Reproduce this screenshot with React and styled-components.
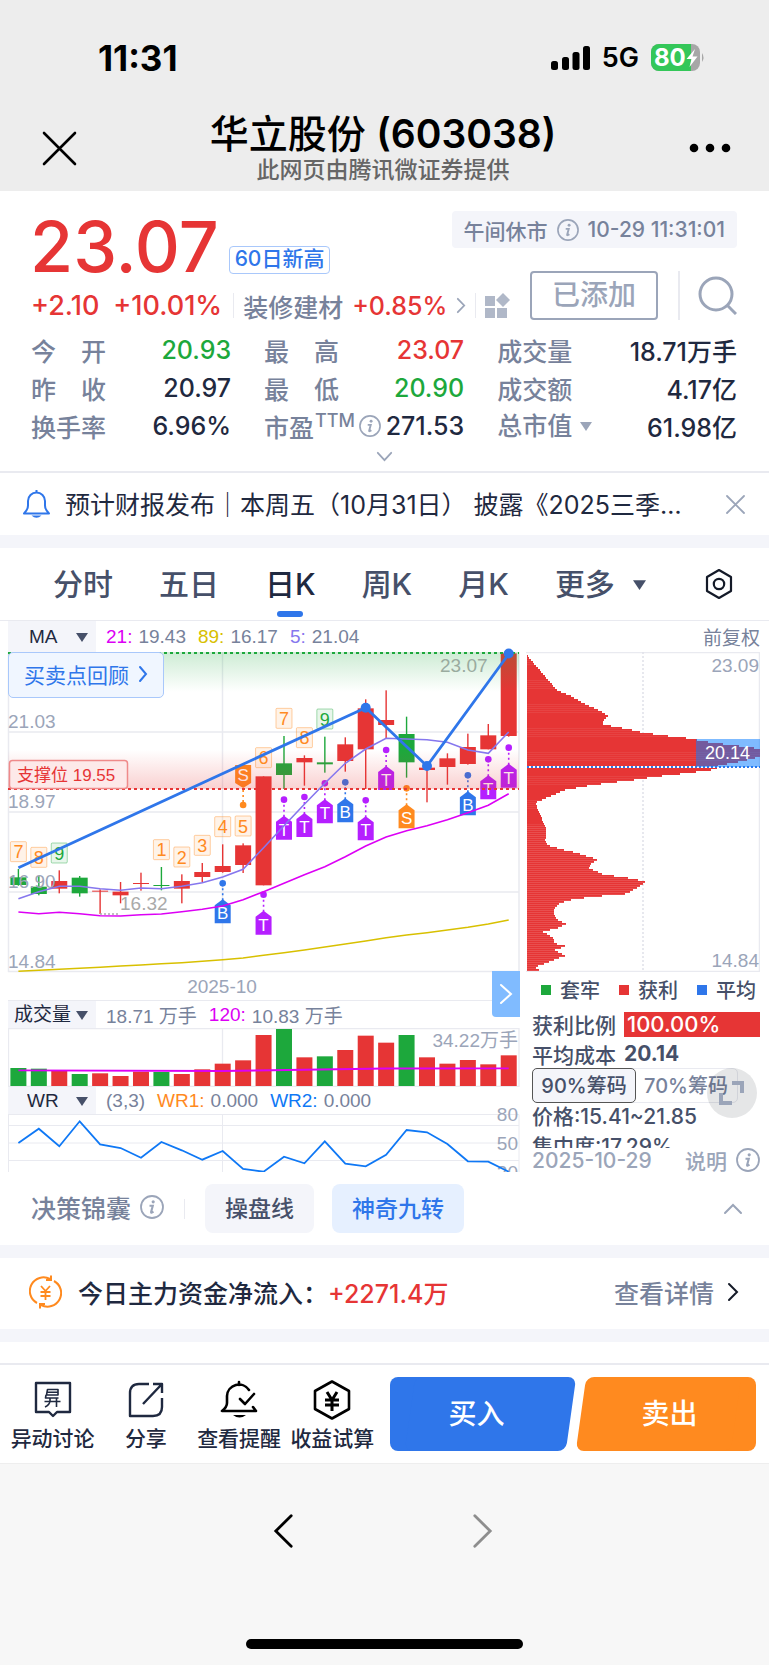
import React from "react";
import styled, { createGlobalStyle } from "styled-components";

const c = {
  red: "#e63535", green: "#1da83c", blue: "#2f76ea", orange: "#ff8a1f",
  ink: "#1f2940", slate: "#465069", muted: "#77829b", pale: "#9ba5b9",
  line: "#e9eaf0", band: "#f4f5fa", purple: "#b51fff", magenta: "#dc00f5",
  yellow: "#d8c000", ma5: "#8677ee",
};
const arial = '"Liberation Sans", "Noto Sans CJK SC", sans-serif';

const Global = createGlobalStyle`
  * { box-sizing: border-box; }
  body { margin: 0; background: #fff; color: ${c.ink};
    font-family: Inter, "Noto Sans CJK SC", sans-serif; font-weight: 500; }
  button, select { font: inherit; color: inherit; border: 0; background: none; padding: 0; margin: 0; }
  a { color: inherit; text-decoration: none; }
  svg { display: block; flex: none; }
  h1, p, dl, dd, dt { margin: 0; }
`;

/* ---------- phone header ---------- */
const Header = styled.header`background: #ededed; color: #000; height: 191px;`;
const StatusBar = styled.div`
  display: flex; align-items: center; justify-content: space-between;
  padding: 41px 64px 0 98px; height: 74px; gap: 12px;
`;
const Clock = styled.span`font-size: 35px; font-weight: 700;`;
const StatusIcons = styled.div`display: flex; align-items: center; gap: 12px; font-size: 27px; font-weight: 600;`;
const TitleBar = styled.div`
  display: flex; align-items: center; justify-content: space-between;
  padding: 36px 38px 0 42px;
`;
const Titles = styled.div`text-align: center;`;
const Title = styled.h1`font-size: 39px; line-height: 48px; font-weight: 500; white-space: nowrap;`;
const Code = styled.span`font-weight: 600;`;
const Subtitle = styled.p`font-size: 23px; line-height: 24px; color: #666; font-weight: 500;`;
const IconButton = styled.button`display: flex; align-items: center; justify-content: center;`;
const BarButton = styled(IconButton)`margin-top: 4px;`;

/* ---------- quote ---------- */
const Quote = styled.section`
  padding: 20px 32px 0; height: 282px; border-bottom: 2px solid ${c.line};
`;
const QuoteRow = styled.div`
  display: flex; justify-content: space-between; align-items: ${(p) => p.$align};
  height: ${(p) => p.$h}px;
`;
const PriceLine = styled.div`display: flex; align-items: flex-end; gap: 10px; height: 63px;`;
const Price = styled.strong`font-size: 70px; line-height: 55px; font-weight: 500; color: ${c.red}; margin-left: -2px;`;
const Tag = styled.span`
  height: 28px; line-height: 24px; padding: 0 5px; font-size: 21px; color: ${c.blue};
  border: 1px solid #a9c8fb; border-radius: 4px; white-space: nowrap;
`;
const ChangeLine = styled.div`
  display: flex; align-items: center; gap: 9px; height: 29px; margin-left: -1px;
  font-size: 25px; white-space: nowrap;
`;
const Change = styled.span`font-size: 27px; color: ${c.red}; margin-right: ${(p) => (p.$gap ? 5 : 2)}px;`;
const Num = styled.span`color: ${(p) => c[p.$tone] || c.ink};`;
const Muted = styled.span`color: ${c.muted};`;
const Rule = styled.i`width: ${(p) => p.$w || 1}px; height: ${(p) => p.$h}px; margin: 0 ${(p) => p.$m || 0}px; background: ${c.line}; flex: none;`;
const Pill = styled.div`
  display: flex; align-items: center; gap: 9px; height: 37px; padding: 0 12px;
  background: ${c.band}; border-radius: 4px; font-size: 21px; color: ${c.muted}; white-space: nowrap;
`;
const Actions = styled.div`display: flex; align-items: center; gap: 18px;`;
const AddButton = styled.button`
  width: 128px; height: 49px; border: 2px solid ${c.pale}; border-radius: 4px; padding-bottom: 5px;
  font-size: 28px; color: ${c.pale}; margin-right: 2px;
`;
const Stats = styled.dl`
  display: grid; grid-template-columns: 5fr 5fr 6fr; column-gap: 34px; margin-top: 11px;
`;
const Stat = styled.div`
  display: flex; align-items: center; justify-content: space-between; height: 38px;
  font-size: 25px; white-space: nowrap;
`;
const StatName = styled.dt`
  display: flex; align-items: center; gap: ${(p) => (p.$wide ? 25 : 4)}px; margin-left: -1px; color: ${c.muted}; flex: none;
`;
const Sup = styled.sup`font-size: 18px; line-height: 26px; align-self: flex-start; margin-left: -3px;`;
const Expand = styled.button`display: flex; width: 100%; height: 22px; align-items: center; justify-content: center;`;
const PlainSelect = styled.select`appearance: none; cursor: pointer; outline: none;`;
const SelectBox = styled.label`display: flex; align-items: center; gap: ${(p) => p.$gap || 6}px;`;

/* ---------- notice and tabs ---------- */
const Notice = styled.section`
  display: flex; align-items: center; gap: 15px; height: 62px; padding: 0 23px;
  font-size: 25px; font-weight: 400;
`;
const NoticeText = styled.a`
  flex: 1; min-width: 0; margin-right: 14px; padding-bottom: 3px;
  white-space: nowrap; overflow: hidden; text-overflow: ellipsis;
`;
const Band = styled.div`height: 13px; background: ${c.band};`;
const Tabs = styled.nav`
  display: flex; align-items: stretch; gap: 46px; height: 73px; padding: 0 35px 0 53px;
  font-size: 30px; color: ${c.slate}; border-bottom: 1px solid ${c.line};
`;
const Tab = styled.button`
  position: relative; white-space: nowrap; padding-bottom: 4px;
  color: ${(p) => (p.$on ? c.ink : c.slate)};
  &::after { content: ""; display: ${(p) => (p.$on ? "block" : "none")}; position: absolute;
    left: calc(50% - 13px); bottom: 3px; width: 26px; height: 6px; border-radius: 3px; background: ${c.blue}; }
`;
const TabEnd = styled.button`margin-left: auto;`;

/* ---------- charts ---------- */
const Indicator = styled.div`
  display: flex; align-items: center; height: ${(p) => p.$h || 27}px; gap: 8px;
  font: 400 19px ${arial}; color: ${c.muted}; white-space: nowrap;
`;
const IndicatorRow = styled(Indicator)`padding: 0 9px 0 8px;`;
const Pick = styled.label`
  display: flex; align-items: center; justify-content: space-between; align-self: stretch;
  width: 88px; padding: 0 8px 0 ${(p) => p.$pad}px; margin-right: 2px;
  background: ${c.band}; color: ${c.ink};
`;
const Hue = styled.span`color: ${(p) => p.$c}; margin-right: -2px; margin-left: ${(p) => (p.$first ? 0 : 4)}px;`;
const Grow = styled.span`margin-left: auto;`;
const ChartArea = styled.section`display: flex; gap: 6px; padding: 0 9px 0 8px;`;
const ChartCol = styled.div`flex: 512 1 0; min-width: 0; position: relative;`;
const ChipCol = styled.div`flex: 234 1 0; min-width: 0; position: relative; display: flex; flex-direction: column;`;
const Plot = styled.svg`width: 100%; height: auto; font-family: ${arial}; font-weight: 400;`;
const WrPlot = styled(Plot)`margin-top: -10px; position: relative;`;
const MainWrap = styled.div`position: relative; border-bottom: 1px solid ${c.line};`;
const Review = styled.button`
  position: absolute; left: 0; top: 0; display: flex; align-items: center; justify-content: center; gap: 9px;
  width: 156px; height: 46px; padding-bottom: 2px; font-size: 21px; font-weight: 400; color: ${c.blue};
  background: #f0f6ff; border: 1px solid #a9c8fb; border-radius: 5px;
`;
const Pager = styled.button`
  position: absolute; right: 0; bottom: -17px; width: 28px; height: 46px; z-index: 1;
  display: flex; align-items: center; justify-content: center;
  background: #80bbff; border-radius: 0 0 0 4px;
`;
const Legend = styled.div`
  display: flex; justify-content: space-between; align-items: center; height: 37px; padding: 0 4px 2px 15px;
  font-size: 20px; color: ${c.slate};
`;
const LegendItem = styled.span`
  display: flex; align-items: center; gap: 9px;
  &::before { content: ""; width: 10px; height: 10px; background: ${(p) => p.$c}; }
`;
const ChipInfo = styled.div`
  flex: 1 1 0; min-height: 0; overflow: hidden; padding-left: 6px;
  font-size: 21px; color: ${c.slate}; white-space: nowrap;
`;
const InfoLine = styled.div`display: flex; align-items: center; gap: 8px; height: ${(p) => p.$h}px;`;
const Ratio = styled.span`
  flex: 1; background: ${c.red}; color: #fff; height: 25px; line-height: 25px; padding-left: 3px; font-size: 22px;
`;
const Bold = styled.b`font-weight: 700;`;
const ChipTabs = styled.div`
  display: flex; width: 206px; height: 35px; border: 1px solid ${c.line}; border-radius: 5px; font-size: 20px;
`;
const ChipTab = styled.button`
  flex: 1; margin: -1px; border-radius: 5px; padding-bottom: 2px;
  border: 1px solid ${(p) => (p.$on ? "#555" : "transparent")};
  background: ${(p) => (p.$on ? c.band : "none")}; color: ${(p) => (p.$on ? c.slate : c.muted)};
`;
const ChipFoot = styled.div`
  display: flex; align-items: center; justify-content: space-between; height: 24px; padding-left: 6px;
  font-size: 21px; color: ${c.pale}; white-space: nowrap;
`;
const Help = styled.a`display: flex; align-items: center; gap: 9px;`;
const Fullscreen = styled.button`
  position: absolute; right: 3px; bottom: 54px; width: 50px; height: 50px; border-radius: 50%;
  background: rgba(20, 24, 40, 0.11); display: flex; align-items: center; justify-content: center;
`;

/* ---------- strategy, funds, bottom bar ---------- */
const Strategy = styled.section`
  display: flex; align-items: center; gap: 18px; height: 73px; padding: 0 26px 0 31px; font-size: 25px;
`;
const Named = styled.span`display: flex; align-items: center; gap: 9px; padding-bottom: 4px; color: ${c.muted};`;
const Chip = styled.button`
  height: 49px; padding: 0 20px 4px; border-radius: 8px; font-size: 23px; white-space: nowrap;
  background: ${(p) => (p.$on ? "#e6f0ff" : c.band)}; color: ${(p) => (p.$on ? c.blue : c.slate)};
`;
const Funds = styled.section`
  display: flex; align-items: center; height: 71px; padding: 0 30px 4px 29px; font-size: 25px; white-space: nowrap;
`;
const FundText = styled.span`margin-left: 16px;`;
const FundLink = styled.a`display: flex; align-items: center; gap: 13px; margin-left: auto; color: ${c.muted};`;
const NextCard = styled.div`height: 21px;`;
const BottomBar = styled.footer`
  display: flex; align-items: center; height: 101px; padding: 0 13px 0 6px;
  border-top: 2px solid ${c.line}; border-bottom: 1px solid #eee;
`;
const Tools = styled.div`display: flex; flex: 373 1 0; padding-top: 6px;`;
const Tool = styled.button`
  flex: 1 1 0; min-width: 0; display: flex; flex-direction: column; align-items: center; gap: 3px;
  font-size: 21px; line-height: 32px; white-space: nowrap;
`;
const Trade = styled.div`display: flex; flex: 366 1 0; margin-left: 11px;`;
const TradeButton = styled.button`
  position: relative; z-index: 0; flex: 1; height: 74px; color: #fff; font-size: 28px;
  padding: 0 ${(p) => (p.$sell ? "0 5px 6px" : "14px 5px 0")};
  &::before, &::after { content: ""; position: absolute; z-index: -1; top: 0; bottom: 0;
    border-radius: 8px; background: ${(p) => (p.$sell ? c.orange : c.blue)}; }
  &::before { left: ${(p) => (p.$sell ? "30px" : "0")}; right: ${(p) => (p.$sell ? "0" : "30px")}; }
  &::after { left: ${(p) => (p.$sell ? "4px" : "20px")}; right: ${(p) => (p.$sell ? "20px" : "6px")}; transform: skewX(-8deg); }
`;
const Browser = styled.nav`
  display: flex; flex-direction: column; align-items: center; justify-content: space-between;
  height: 201px; padding: 49px 0 16px; background: #f7f7f7;
`;
const History = styled.div`display: flex; justify-content: center; gap: 178px; padding-right: 4px;`;
const HomeBar = styled.span`width: 36%; height: 10px; border-radius: 5px; background: #000;`;

/* ---------- small drawings ---------- */
const Info = ({ size = 24 }) => (
  <svg width={size} height={size} viewBox="0 0 24 24">
    <circle cx="12" cy="12" r="11" fill="none" stroke={c.pale} strokeWidth="1.8" />
    <circle cx="13.2" cy="6.8" r="1.6" fill={c.pale} />
    <path d="M9.500 10.800h3.300l-1.700 6.200q-.2 1.400 2.400-.3" fill="none" stroke={c.pale} strokeWidth="2.100" />
  </svg>
);
const Caret = ({ color = c.slate, size = 12 }) => (
  <svg width={size} height={size} viewBox="0 0 12 12"><path d="M0 2h12L6 11z" fill={color} /></svg>
);
const Chevron = ({ w, h, color, sw = 2, dir = "right" }) => {
  const d = { right: `M${sw} ${sw}L${w - sw} ${h / 2}L${sw} ${h - sw}`, left: `M${w - sw} ${sw}L${sw} ${h / 2}L${w - sw} ${h - sw}`,
    down: `M${sw} ${sw}L${w / 2} ${h - sw}L${w - sw} ${sw}`, up: `M${sw} ${h - sw}L${w / 2} ${sw}L${w - sw} ${h - sw}` }[dir];
  return <svg width={w} height={h}><path d={d} fill="none" stroke={color} strokeWidth={sw} strokeLinecap="round" /></svg>;
};
const Cross = ({ size, color, sw }) => (
  <svg width={size} height={size}><path d={`M2 2L${size - 2} ${size - 2}M${size - 2} 2L2 ${size - 2}`} stroke={color} strokeWidth={sw} strokeLinecap="round" /></svg>
);

/* ---------- chart data, in plot units ---------- */
const xAt = (i) => 10.4 + 20.43 * i;
const yMain = (v) => v / 3 - 32;
const candles = [
  ["g", 772, 795, 747, 797], ["g", 800, 822, 768, 826], ["r", 783, 806, 751, 820], ["g", 773, 820, 768, 830],
  ["r", 812, 815, 808, 882], ["r", 815, 826, 786, 850], ["r", 789, 792, 758, 812], ["g", 795, 798, 741, 811],
  ["r", 783, 806, 763, 850], ["r", 756, 771, 729, 787], ["r", 738, 756, 673, 758], ["r", 676, 735, 670, 759],
  ["r", 469, 796, 469, 796], ["g", 430, 465, 348, 507], ["r", 414, 427, 406, 497], ["g", 427, 433, 350, 458],
  ["r", 373, 423, 352, 455], ["r", 265, 388, 238, 507], ["r", 300, 315, 211, 355], ["g", 342, 427, 290, 473],
  ["r", 443, 450, 430, 547], ["r", 415, 441, 400, 494], ["r", 381, 432, 341, 434], ["r", 346, 388, 312, 388],
  ["r", 100, 348, 100, 350],
];
const ma5 = [836, 815, 799, 799, 806, 811, 804, 806, 799, 788, 771, 748, 683, 617, 553, 490, 430, 387, 355, 357, 359, 367, 390, 400, 336];
const ma21 = [876, 881, 877, 881, 887, 888, 884, 882, 875, 868, 858, 839, 815, 790, 764, 740, 710, 678, 651, 632, 617, 599, 578, 556, 521];
const ma89 = [1054, 1051, 1048, 1045, 1042, 1038, 1035, 1031, 1028, 1024, 1019, 1014, 1006, 998, 990, 981, 972, 963, 953, 945, 938, 930, 922, 912, 900];
const nine = [[0, 7, 695], [1, 8, 712], [2, 9, 699], [7, 1, 689], [8, 2, 711], [9, 3, 676], [10, 4, 620], [11, 5, 618], [12, 6, 413], [13, 7, 295], [14, 8, 353], [15, 9, 297]];
const marks = [["B", 10, 790], ["T", 12, 824], ["T", 13, 539], ["T", 14, 531], ["T", 15, 490], ["B", 16, 487], ["T", 17, 541], ["T", 18, 390], ["S", 19, 505], ["B", 22, 466], ["T", 23, 418], ["T", 24, 383]];
const markColor = { B: c.blue, T: c.purple, S: c.orange };
const volumes = [264, 266, 272, 282, 280, 288, 275, 276, 282, 268, 251, 241, 165, 147, 232, 229, 210, 167, 188, 165, 232, 251, 240, 253, 226];
const wr = [489, 446, 499, 424, 493, 504, 533, 486, 511, 539, 513, 567, 575, 530, 550, 484, 551, 559, 524, 450, 457, 492, 544, 545, 575];
const profile = [
  [37, 106], [128, 212], [170, 228], [200, 247], [240, 265], [282, 287], [265, 302], [265, 314], [345, 328], [380, 337], [452, 347],
  [530, 356], [565, 364], [640, 374], [735, 386], [735, 410], [690, 422], [612, 437], [605, 448], [515, 460], [425, 470], [350, 481],
  [265, 491], [210, 499], [150, 510], [100, 532], [62, 548], [95, 630], [92, 660], [97, 675], [137, 687], [178, 697], [215, 708],
  [250, 718], [228, 732], [224, 745], [262, 762], [310, 770], [360, 777], [394, 787], [375, 798], [350, 814], [330, 822], [272, 827],
  [218, 833], [175, 838], [135, 850], [120, 865], [117, 885], [130, 900], [155, 912], [130, 924], [84, 935], [118, 955], [120, 970],
  [155, 979], [122, 990], [150, 1008], [100, 1027], [60, 1042], [83, 1056],
];
const widthAt = (y) => {
  const k = profile.findIndex((p) => p[1] >= y);
  if (k <= 0) return 40;
  const [x0, y0] = profile[k - 1];
  const [x1, y1] = profile[k];
  return x0 + ((x1 - x0) * (y - y0)) / (y1 - y0);
};
const profileRows = Array.from({ length: 158 }, (_, n) => ({ y: 3 + n * 2, w: Math.round((widthAt(108 + n * 6) - 37) / 3) }));
const path = (values, y) => values.map((v, i) => `${i ? "L" : "M"}${xAt(i).toFixed(1)} ${y(v).toFixed(1)}`).join("");
const fillOf = (k) => (k === "g" ? c.green : c.red);

function Marker({ kind, i, dot }) {
  const x = xAt(i), y = yMain(dot), col = markColor[kind];
  return (
    <g>
      <circle cx={x} cy={y} r="3.3" fill={col} />
      <path d={`M${x} ${y + 5}v13`} stroke={col} strokeWidth="1.6" strokeDasharray="2 3" />
      <path d={`M${x} ${y + 16}l8 6v18h-16v-18z`} fill={col} />
      <text x={x} y={y + 36} fontSize="17" textAnchor="middle" fill="#fff">{kind}</text>
    </g>
  );
}

function MainChart() {
  const sx = xAt(11);
  return (
    <Plot viewBox="0 0 512 348" overflow="visible">
      <defs>
        <linearGradient id="up" x2="0" y2="1"><stop offset="0" stopColor={c.green} stopOpacity="0.22" /><stop offset="1" stopColor={c.green} stopOpacity="0" /></linearGradient>
        <linearGradient id="down" x2="0" y2="1"><stop offset="0" stopColor={c.red} stopOpacity="0" /><stop offset="1" stopColor={c.red} stopOpacity="0.23" /></linearGradient>
      </defs>
      <path d="M.5 0V320M511 0V320M0 80H511M0 160H511M0 240H511M0 319.5H511M214.5 0V320" stroke={c.line} strokeWidth="1.5" fill="none" />
      {candles.map(([k, top, bottom, high, low], i) => (
        <g key={i} fill={fillOf(k)}>
          <rect x={xAt(i) - 0.7} y={yMain(high)} width="1.4" height={(low - high) / 3} />
          <rect x={xAt(i) - 8} y={yMain(top)} width="16" height={(bottom - top) / 3} />
        </g>
      ))}
      {marks.map(([kind, i, dot]) => <Marker key={i} kind={kind} i={i} dot={dot} />)}
      <path d={`M${sx - 8} 113h16v18l-8 5l-8-5z`} fill={c.orange} />
      <path d={`M${sx} 138v12`} stroke={c.orange} strokeWidth="1.6" strokeDasharray="2 3" />
      <circle cx={sx} cy="153" r="3.3" fill={c.orange} />
      <text x={sx} y="129" fontSize="17" textAnchor="middle" fill="#fff">S</text>
      <rect x="0" y="0" width="511" height="40" fill="url(#up)" />
      <rect x="0" y="98" width="511" height="39" fill="url(#down)" />
      <path d="M0 .9H511" stroke={c.green} strokeWidth="2" strokeDasharray="3 3" />
      <path d="M0 137H511" stroke={c.red} strokeWidth="2" strokeDasharray="3 3" />
      <g fontSize="19" fill={c.pale}>
        <text x="0" y="76">21.03</text>
        <text x="0" y="156">18.97</text>
        <text x="0" y="236">16.90</text>
        <text x="0" y="316">14.84</text>
        <text x="214" y="341" textAnchor="middle">2025-10</text>
        <text x="112" y="258" fill="#aaa">16.32</text>
        <text x="432" y="20" fill="#9aab9f">23.07</text>
      </g>
      <path d="M92 262H112" stroke="#aaa" strokeWidth="1.5" strokeDasharray="2 2" />
      {nine.map(([i, n, v]) => {
        const col = n === 9 ? c.green : c.orange;
        return (
          <g key={i}>
            <rect x={xAt(i) - 8} y={yMain(v) - 10} width="16" height="20" rx="1" fill={col} fillOpacity="0.1" stroke={col} strokeOpacity="0.4" />
            <text x={xAt(i)} y={yMain(v) + 6.5} fontSize="18" textAnchor="middle" fill={col}>{n}</text>
          </g>
        );
      })}
      <g fill="none" strokeWidth="1.6">
        <path d={path(ma89, yMain)} stroke={c.yellow} />
        <path d={path(ma21, yMain)} stroke={c.magenta} />
        <path d={path(ma5, yMain)} stroke={c.ma5} />
      </g>
      <rect x="1.5" y="108.5" width="118" height="28" rx="3" fill="#fde9e9" stroke="#ef8a8a" strokeWidth="1.5" />
      <text x="9" y="129" fontSize="17" fill={c.red}>支撑位 19.55</text>
      <path d={`M${xAt(0)} 215.7L${xAt(17)} 55.7L${xAt(20)} 114L${xAt(24)} 2`} fill="none" stroke={c.blue} strokeWidth="2.8" strokeLinejoin="round" />
      <circle cx={xAt(17)} cy="55.7" r="5" fill={c.blue} />
      <circle cx={xAt(20)} cy="114" r="5" fill={c.blue} />
      <circle cx={xAt(24)} cy="1.5" r="5" fill={c.blue} />
    </Plot>
  );
}

function VolumeChart() {
  const y = (v) => v / 3 - 48;
  return (
    <Plot viewBox="0 0 512 59">
      <path d="M0 .5H511V58.5H.5V0M214.5 0V58" stroke={c.line} strokeWidth="1.3" fill="none" />
      {volumes.map((v, i) => <rect key={i} x={xAt(i) - 8} y={y(v)} width="16" height={58 - y(v)} fill={fillOf(candles[i][0])} />)}
      <path d={`M${xAt(0)} 42.4L${xAt(10)} 43L${xAt(18)} 40.5L${xAt(24)} 40.3`} fill="none" stroke={c.magenta} strokeWidth="1.8" />
      <text x="510" y="19" fontSize="19" textAnchor="end" fill={c.pale}>34.22万手</text>
    </Plot>
  );
}

function WrChart() {
  return (
    <WrPlot viewBox="0 -10 512 68">
      <path d="M0 .5H511V58M.5 0V58M0 11.5H511M0 29H511M0 46.5H511M214.5 0V58" stroke={c.line} fill="none" />
      <g fontSize="19" fill={c.pale} textAnchor="end">
        <text x="510" y="7">80</text>
        <text x="510" y="36">50</text>
        <text x="510" y="65">20</text>
      </g>
      <path d={path(wr, (v) => v / 3 - 134)} fill="none" stroke="#0f78f5" strokeWidth="1.8" />
    </WrPlot>
  );
}

function ChipChart() {
  return (
    <Plot viewBox="0 0 234 320">
      <path d="M0 .5H233.5V319.5H0" fill="none" stroke={c.line} strokeWidth="1.5" />
      <path d="M117 0V320" stroke="#dfe1e9" strokeWidth="1.5" strokeDasharray="2 2" />
      {profileRows.map((r, n) => (
        <g key={n}>
          <rect x="1" y={r.y} width={r.w} height="2" fill={c.red} />
          {n > 84 || n % 12 < 5 ? <rect x="1" y={r.y + 1} width={r.w} height="1" fill="#fff" fillOpacity={n > 84 ? 0.13 : 0.07} /> : null}
        </g>
      ))}
      <path d="M1 115H234" stroke="#fff" strokeWidth="1.8" />
      <path d="M1 115H234" stroke={c.blue} strokeWidth="1.8" strokeDasharray="2 2" />
      <rect x="170" y="87" width="64" height="28" fill="rgb(10,124,255)" fillOpacity="0.52" />
      <g fontSize="19" fill={c.pale} textAnchor="end">
        <text x="233" y="20">23.09</text>
        <text x="233" y="315">14.84</text>
      </g>
      <text x="179" y="107" fontSize="18" fill="#fff">20.14</text>
    </Plot>
  );
}

const stats = [
  { name: ["今", "开"], value: "20.93", tone: "green" }, { name: ["最", "高"], value: "23.07", tone: "red" }, { name: ["成交量"], value: "18.71万手" },
  { name: ["昨", "收"], value: "20.97" }, { name: ["最", "低"], value: "20.90", tone: "green" }, { name: ["成交额"], value: "4.17亿" },
  { name: ["换手率"], value: "6.96%" }, { name: ["市盈"], value: "271.53", ttm: true }, { name: ["总市值"], value: "61.98亿", pick: true },
];

export default function App() {
  return (
    <>
      <Global />
      <Header>
        <StatusBar>
          <Clock>11:31</Clock>
          <StatusIcons>
            <svg width="39" height="24"><rect x="0" y="15" width="7" height="9" rx="2.5" /><rect x="11" y="11" width="7" height="13" rx="2.5" /><rect x="21.500" y="6" width="7" height="18" rx="2.5" /><rect x="32" y="0" width="7" height="24" rx="2.500" /></svg>
            5G
            <svg width="54" height="28" viewBox="0 0 54 28">
              <defs><clipPath id="cell"><rect width="49" height="27" rx="8" /></clipPath></defs>
              <g clipPath="url(#cell)"><rect width="49" height="27" fill="#a7a7a7" /><rect width="40" height="27" fill="#34c759" /></g>
              <path d="M51 9q3 4.500 0 9z" fill="#a7a7a7" />
              <text x="3" y="22" fontFamily="Inter" fontWeight="700" fontSize="24" fill="#fff">80</text>
              <path d="M44 5l-8.500 10h5l-2 8l8-10.500h-5z" fill="#fff" />
            </svg>
          </StatusIcons>
        </StatusBar>
        <TitleBar>
          <BarButton aria-label="关闭"><Cross size={35} color="#000" sw={2.6} /></BarButton>
          <Titles>
            <Title>华立股份 <Code>(603038)</Code></Title>
            <Subtitle>此网页由腾讯微证券提供</Subtitle>
          </Titles>
          <BarButton aria-label="更多选项"><svg width="42" height="10"><circle cx="5" cy="5" r="4.300" /><circle cx="21" cy="5" r="4.300" /><circle cx="37" cy="5" r="4.300" /></svg></BarButton>
        </TitleBar>
      </Header>

      <Quote>
        <QuoteRow $h={60} $align="flex-start">
          <PriceLine><Price>23.07</Price><Tag>60日新高</Tag></PriceLine>
          <Pill>午间休市<Info size={22} />10-29 11:31:01</Pill>
        </QuoteRow>
        <QuoteRow $h={49} $align="flex-end">
          <ChangeLine>
            <Change $gap>+2.10</Change>
            <Change>+10.01%</Change>
            <Rule $h={25} />
            <Muted>装修建材</Muted>
            <Num $tone="red">+0.85%</Num>
            <Chevron w={10} h={17} color={c.pale} sw={1.8} />
            <Rule $h={25} />
            <svg width="26" height="26" viewBox="0 0 26 26" fill="#b0b8c8"><rect y="3" width="10" height="10" /><rect y="15" width="10" height="10" /><rect x="12" y="15" width="10" height="10" /><path d="M18 0l7 7l-7 7l-7-7z" /></svg>
          </ChangeLine>
          <Actions>
            <AddButton>已添加</AddButton>
            <Rule $h={49} $w={2} />
            <IconButton aria-label="搜索"><svg width="39" height="39" fill="none" stroke={c.pale} strokeWidth="3"><circle cx="18" cy="18" r="16" /><path d="M29 29l9 9" /></svg></IconButton>
          </Actions>
        </QuoteRow>
        <Stats>
          {stats.map((s) => (
            <Stat key={s.name.join("")}>
              <StatName $wide={s.name.length > 1}>
                {s.pick ? (
                  <SelectBox $gap={7}><PlainSelect aria-label="总市值"><option>总市值</option></PlainSelect><Caret color={c.pale} /></SelectBox>
                ) : s.name.map((n) => <span key={n}>{n}</span>)}
                {s.ttm && <><Sup>TTM</Sup><Info size={22} /></>}
              </StatName>
              <dd><Num $tone={s.tone}>{s.value}</Num></dd>
            </Stat>
          ))}
        </Stats>
        <Expand aria-label="展开"><Chevron w={17} h={11} color={c.pale} sw={1.8} dir="down" /></Expand>
      </Quote>

      <Notice>
        <svg width="27" height="29" viewBox="0 0 27 29" fill="none" stroke={c.blue} strokeWidth="2"><path d="M13.500 0v3M1 23.500h25q-4-4-4-8V11a8.500 8.500 0 0 0-17 0v4.500q0 4-4 8z" strokeLinejoin="round" /><path d="M8.500 25.500h10q-5 4.500-10 0z" fill={c.blue} stroke="none" /></svg>
        <NoticeText href="#notice">预计财报发布｜本周五（10月31日） 披露《2025三季报》业绩报告</NoticeText>
        <IconButton aria-label="关闭提示"><Cross size={21} color={c.pale} sw={1.8} /></IconButton>
      </Notice>
      <Band />

      <Tabs>
        <Tab>分时</Tab><Tab>五日</Tab><Tab $on>日K</Tab><Tab>周K</Tab><Tab>月K</Tab>
        <SelectBox $gap={18}><PlainSelect aria-label="更多周期"><option>更多</option></PlainSelect><Caret size={13} /></SelectBox>
        <TabEnd aria-label="设置"><svg width="30" height="32" viewBox="0 0 30 32" fill="none" stroke="#141a28" strokeWidth="2.200" strokeLinejoin="round"><path d="M15 2l12 7v14l-12 7l-12-7V9z" /><circle cx="15" cy="16" r="5.200" /></svg></TabEnd>
      </Tabs>

      <IndicatorRow $h={31}>
        <Pick $pad={21}><PlainSelect aria-label="主图指标"><option>MA</option></PlainSelect><Caret /></Pick>
        <Hue $first $c={c.magenta}>21:</Hue>19.43<Hue $c={c.yellow}>89:</Hue>16.17<Hue $c={c.ma5}>5:</Hue>21.04
        <Grow>前复权</Grow>
      </IndicatorRow>

      <ChartArea>
        <ChartCol>
          <MainWrap>
            <MainChart />
            <Review>买卖点回顾<Chevron w={10} h={18} color={c.blue} /></Review>
            <Pager aria-label="后一页"><Chevron w={14} h={22} color="#fff" /></Pager>
          </MainWrap>
          <Indicator>
            <Pick $pad={6}><PlainSelect aria-label="副图指标一"><option>成交量</option></PlainSelect><Caret /></Pick>
            18.71 万手<Hue $c={c.magenta}>120:</Hue>10.83 万手
          </Indicator>
          <VolumeChart />
          <Indicator>
            <Pick $pad={19}><PlainSelect aria-label="副图指标二"><option>WR</option></PlainSelect><Caret /></Pick>
            (3,3)<Hue $c={c.orange}>WR1:</Hue>0.000<Hue $c="#0f78f5">WR2:</Hue>0.000
          </Indicator>
          <WrChart />
        </ChartCol>
        <ChipCol>
          <ChipChart />
          <Legend>
            <LegendItem $c={c.green}>套牢</LegendItem><LegendItem $c={c.red}>获利</LegendItem><LegendItem $c={c.blue}>平均</LegendItem>
          </Legend>
          <ChipInfo>
            <InfoLine $h={30}>获利比例<Ratio>100.00%</Ratio></InfoLine>
            <InfoLine $h={29}>平均成本<Bold>20.14</Bold></InfoLine>
            <ChipTabs><ChipTab $on>90%筹码</ChipTab><ChipTab>70%筹码</ChipTab></ChipTabs>
            <InfoLine $h={24}>价格:15.41~21.85</InfoLine>
            <InfoLine $h={36}>集中度:17.29%</InfoLine>
          </ChipInfo>
          <ChipFoot>2025-10-29<Help href="#help">说明<Info /></Help></ChipFoot>
          <Fullscreen aria-label="全屏"><svg width="26" height="26" fill="none" stroke={c.pale} strokeWidth="4"><path d="M13 3h10v10M2 13v10h11" /></svg></Fullscreen>
        </ChipCol>
      </ChartArea>

      <Strategy>
        <Named>决策锦囊<Info size={24} /></Named>
        <Rule $h={20} $m={2} />
        <Chip>操盘线</Chip><Chip $on>神奇九转</Chip>
        <Grow><IconButton aria-label="收起"><Chevron w={20} h={12} color={c.pale} dir="up" /></IconButton></Grow>
      </Strategy>
      <Band />
      <Funds>
        <svg width="33" height="34" viewBox="0 0 33 34" fill="none" stroke={c.orange} strokeWidth="2"><path d="M8 28A13.500 13.500 0 0 1 21 4M25 6a13.500 13.500 0 0 1-13 24M22 .5v4.500h-5M11 33.500v-4.500h5" /><path d="M12 11l4.500 5l4.500-5M11.500 17h10M11.500 21h10M16.500 16v9" strokeWidth="1.800" /></svg>
        <FundText>今日主力资金净流入：</FundText><Num $tone="red">+2271.4万</Num>
        <FundLink href="#funds">查看详情<Chevron w={12} h={20} color="#141a28" /></FundLink>
      </Funds>
      <Band />
      <NextCard />

      <BottomBar>
        <Tools>
          <Tool>
            <svg width="38" height="40" viewBox="0 0 38 40" fill="none" stroke={c.ink} strokeWidth="2.400" strokeLinejoin="round"><path d="M2 3h34v29H23l-4 4l-4-4H2z" /><path d="M13.500 9.500h10.500v5.500H12.500zM13 12.200h10.500M12 15l-.5 3h13M10.500 21.500h16M16 18v3q-.5 4-5 6M22.500 18v9" strokeWidth="1.600" /></svg>
            异动讨论
          </Tool>
          <Tool>
            <svg width="38" height="40" viewBox="0 0 38 40" fill="none" stroke={c.ink} strokeWidth="2.400" strokeLinejoin="round"><path d="M22 4H12q-9 0-9 9v23h23q9 0 9-9V18M16 24L34 5M26 4h9v9" /></svg>
            分享
          </Tool>
          <Tool>
            <svg width="38" height="40" viewBox="0 0 38 40" fill="none" stroke="#000" strokeWidth="2.600" strokeLinejoin="round" strokeLinecap="round"><path d="M19 2v3M29 10a12 12 0 0 0-22 6v7q0 4-5 8h34l-3-4M20 19l5 5l9-10" /><path d="M13 35h13q-6.500 5-13 0z" fill="#000" stroke="none" /></svg>
            查看提醒
          </Tool>
          <Tool>
            <svg width="38" height="40" viewBox="0 0 38 40" fill="none" stroke="#000" strokeWidth="2.600" strokeLinejoin="round"><path d="M19 1.500l17 9.500v18l-17 9.500l-17-9.500V11z" /><path d="M14 12l5 8l5-8M12 20h14M12 25h14M19 19v12" strokeWidth="3" /></svg>
            收益试算
          </Tool>
        </Tools>
        <Trade><TradeButton>买入</TradeButton><TradeButton $sell>卖出</TradeButton></Trade>
      </BottomBar>
      <Browser>
        <History>
          <IconButton aria-label="后退"><Chevron w={21} h={36} color="#000" sw={2.8} dir="left" /></IconButton>
          <IconButton aria-label="前进"><Chevron w={21} h={36} color="#8e8e8e" sw={2.8} /></IconButton>
        </History>
        <HomeBar />
      </Browser>
    </>
  );
}
